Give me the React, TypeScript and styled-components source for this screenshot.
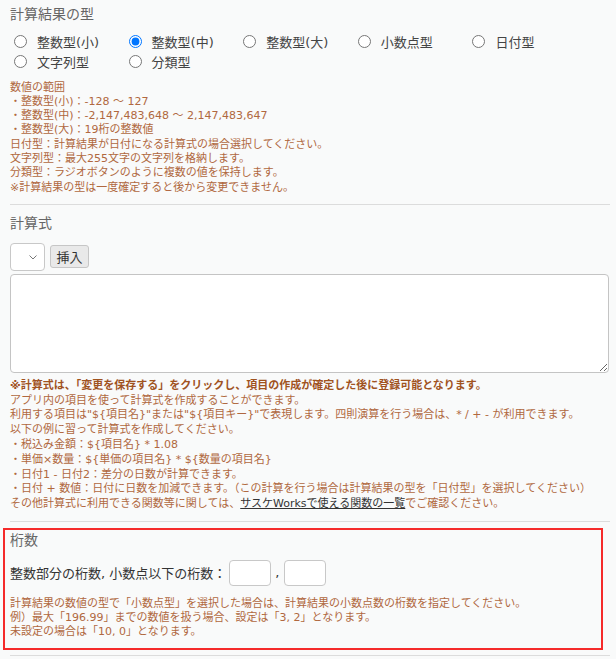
import * as React from 'react';
import styled, { createGlobalStyle } from 'styled-components';

const GlobalStyle = createGlobalStyle`
  html, body {
    margin: 0;
    padding: 0;
    background: #f9fafa;
  }
  body {
    font-family: "DejaVu Sans", "Noto Sans CJK JP", sans-serif;
    color: #333;
  }
`;

const TYPES = ['整数型(小)', '整数型(中)', '整数型(大)', '小数点型', '日付型', '文字列型', '分類型'];

const RANGE_NOTES = [
  '数値の範囲',
  '・整数型(小)：-128 ～ 127',
  '・整数型(中)：-2,147,483,648 ～ 2,147,483,647',
  '・整数型(大)：19桁の整数値',
  '日付型：計算結果が日付になる計算式の場合選択してください。',
  '文字列型：最大255文字の文字列を格納します。',
  '分類型：ラジオボタンのように複数の値を保持します。',
  '※計算結果の型は一度確定すると後から変更できません。',
];

const FORMULA_NOTES = [
  'アプリ内の項目を使って計算式を作成することができます。',
  '利用する項目は"${項目名}"または"${項目キー}"で表現します。四則演算を行う場合は、* / + - が利用できます。',
  '以下の例に習って計算式を作成してください。',
  '・税込み金額：${項目名} * 1.08',
  '・単価×数量：${単価の項目名} * ${数量の項目名}',
  '・日付1 - 日付2：差分の日数が計算できます。',
  '・日付 + 数値：日付に日数を加減できます。（この計算を行う場合は計算結果の型を「日付型」を選択してください）',
];

const DIGIT_NOTES = [
  '計算結果の数値の型で「小数点型」を選択した場合は、計算結果の小数点数の桁数を指定してください。',
  '例）最大「196.99」までの数値を扱う場合、設定は「3, 2」となります。',
  '未設定の場合は「10, 0」となります。',
];

export default function App() {
  const [type, setType] = React.useState('整数型(中)');

  return (
    <Page>
      <GlobalStyle />
      <Title $top={4}>計算結果の型</Title>
      <RadioGrid>
        {TYPES.map((t) => (
          <RadioItem key={t}>
            <Radio type='radio' name='type' checked={type === t} onChange={() => setType(t)} />
            {t}
          </RadioItem>
        ))}
      </RadioGrid>
      <Notes $top={9.5} $lh={14.3}>
        {RANGE_NOTES.map((n) => <div key={n}>{n}</div>)}
      </Notes>
      <Divider $top={9} />

      <Title $top={8}>計算式</Title>
      <Toolbar>
        <SelectBox>
          <Select defaultValue=''>
            <option value='' />
          </Select>
          <Chevron viewBox='0 0 8 5' width='8' height='5'>
            <path d='M0.5 0.5 L4 4 L7.5 0.5' fill='none' stroke='#777' strokeWidth='1' />
          </Chevron>
        </SelectBox>
        <InsertButton>挿入</InsertButton>
      </Toolbar>
      <Formula />
      <Notes $top={6} $lh={14.8}>
        <Strong>※計算式は、「変更を保存する」をクリックし、項目の作成が確定した後に登録可能となります。</Strong>
        {FORMULA_NOTES.map((n) => <div key={n}>{n}</div>)}
        <div>
          その他計算式に利用できる関数等に関しては、<Link href='#'>サスケWorksで使える関数の一覧</Link>でご確認ください。
        </div>
      </Notes>
      <Divider $top={8.5} />

      <Highlight>
        <Title>桁数</Title>
        <DigitRow>
          整数部分の桁数, 小数点以下の桁数：
          <DigitInput />
          <Comma>,</Comma>
          <DigitInput />
        </DigitRow>
        <Notes $top={11} $lh={14}>
          {DIGIT_NOTES.map((n) => <div key={n}>{n}</div>)}
        </Notes>
      </Highlight>
      <Divider $top={5} />
    </Page>
  );
}

const Page = styled.div`
  width: 600px;
  margin-left: 10px;
  padding-bottom: 20px;
`;

const Title = styled.div<{ $top?: number }>`
  margin-top: ${(p) => p.$top || 0}px;
  font-size: 14px;
  line-height: 20px;
  color: #666;
`;

const RadioGrid = styled.div`
  display: grid;
  grid-template-columns: repeat(5, 114.6px);
  grid-auto-rows: 20px;
  margin-top: 7px;
`;

const RadioItem = styled.label`
  display: flex;
  align-items: center;
  font-size: 13px;
  color: #444;
`;

const Radio = styled.input`
  width: 13px;
  height: 13px;
  margin: 0 10px 0 4px;
`;

const Notes = styled.div<{ $top: number; $lh: number }>`
  margin-top: ${(p) => p.$top}px;
  font-size: 11px;
  line-height: ${(p) => p.$lh}px;
  color: #b06840;
  white-space: nowrap;
`;

const Strong = styled.div`
  font-weight: 700;
  color: #a0531f;
`;

const Link = styled.a`
  color: #333;
  text-decoration: underline;
`;

const Divider = styled.hr<{ $top: number }>`
  margin: ${(p) => p.$top}px 0 0;
  border: 0;
  border-top: 1px solid #dcdcdc;
  height: 0;
`;

const Toolbar = styled.div`
  display: flex;
  align-items: center;
  gap: 5px;
  margin-top: 10px;
`;

const SelectBox = styled.div`
  position: relative;
  width: 35px;
  height: 28px;
`;

const Select = styled.select`
  appearance: none;
  width: 35px;
  height: 28px;
  box-sizing: border-box;
  border: 1px solid #c8c8c8;
  border-radius: 4px;
  background: #fff;
`;

const Chevron = styled.svg`
  position: absolute;
  left: 19px;
  top: 12px;
  pointer-events: none;
`;

const InsertButton = styled.button`
  height: 23px;
  width: 39px;
  padding: 0;
  box-sizing: border-box;
  border: 1px solid #c6c6c6;
  border-radius: 3px;
  background: #e9e9e9;
  font-family: "DejaVu Sans", "Noto Sans CJK JP", sans-serif;
  font-size: 13px;
  color: #333;
`;

const Formula = styled.textarea`
  display: block;
  margin-top: 3px;
  width: 599px;
  height: 99px;
  box-sizing: border-box;
  border: 1px solid #c4c4c4;
  border-radius: 4px;
  background: #fff;
`;

const Highlight = styled.section`
  margin: 6px 7px 0 -7px;
  padding: 0 5px 9px;
  border: 2px solid #f52a2a;
`;

const DigitRow = styled.div`
  display: flex;
  align-items: center;
  margin-top: 10px;
  height: 26px;
  font-size: 13px;
  color: #333;
`;

const DigitInput = styled.input`
  width: 42px;
  height: 26px;
  box-sizing: border-box;
  border: 1px solid #c8c8c8;
  border-radius: 4px;
  background: #fff;
  margin-left: 3px;
`;

const Comma = styled.span`
  margin: 0 2px 0 4px;
  color: #333;
`;
